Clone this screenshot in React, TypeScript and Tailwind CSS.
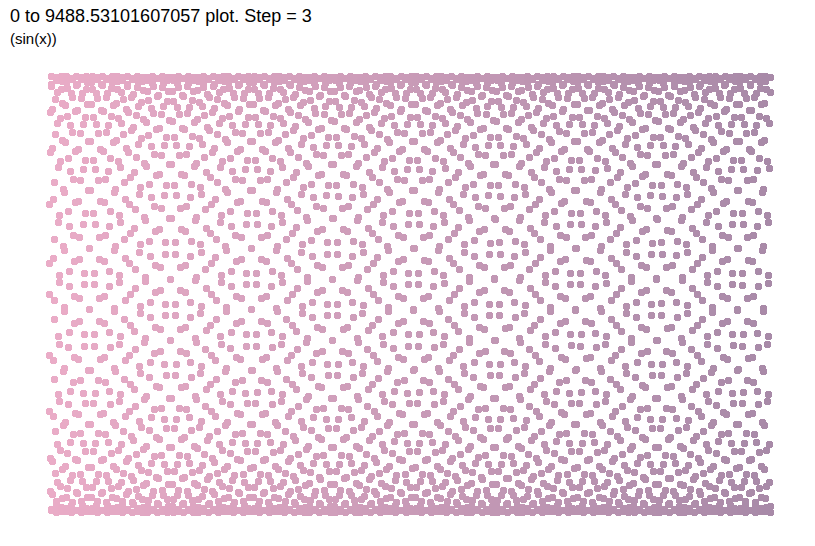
const X_MAX = 9488.53101607057;
const STEP = 3;

function mix(a: number, b: number, t: number) {
  return Math.round(a + (b - a) * t);
}

function buildDots() {
  const dots = [];
  for (let x = 0; x <= X_MAX; x += STEP) {
    const t = x / X_MAX;
    dots.push({
      // dots sit on whole pixels, the chart has no anti-aliasing
      cx: Math.floor(49 + t * 722) + 0.5,
      cy: Math.floor(294.5 - Math.sin(x) * 218) + 0.5,
      fill: `rgb(${mix(234, 168, t)},${mix(172, 138, t)},${mix(199, 168, t)})`,
    });
  }
  return dots;
}

export default function App() {
  return (
    <div className="h-[546px] w-[815px] overflow-hidden bg-white font-['Liberation_Sans',sans-serif] text-black">
      <div className="px-[10px] pt-[6px]">
        <h1 className="text-[18px] leading-[21px] font-normal">
          0 to 9488.53101607057 plot. Step = 3
        </h1>
        <p className="mt-[3px] text-[15px] leading-[17px]">(sin(x))</p>
      </div>
      <svg width="815" height="499" viewBox="0 47 815 499" shapeRendering="crispEdges" className="block">
        {buildDots().map((d, i) => (
          <circle key={i} cx={d.cx} cy={d.cy} r="3.58" fill={d.fill} />
        ))}
      </svg>
    </div>
  );
}
